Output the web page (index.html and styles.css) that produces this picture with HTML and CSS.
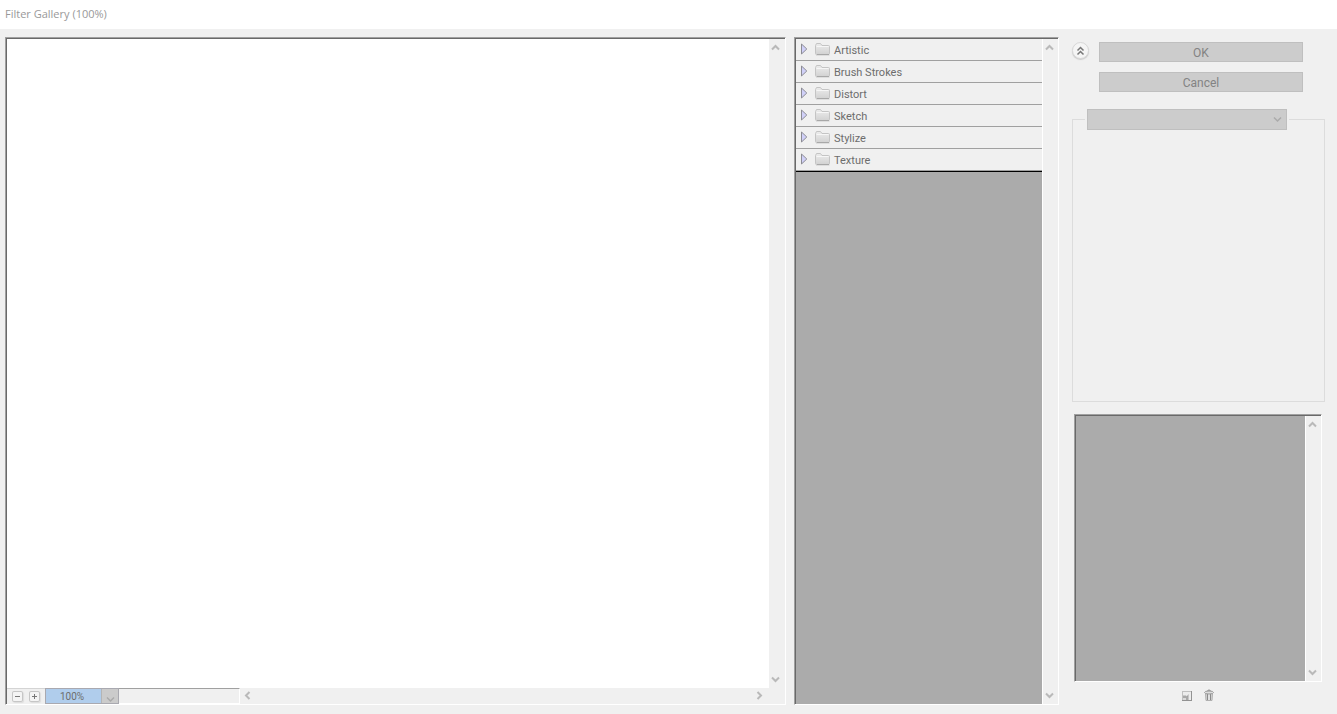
FILE: index.html
```html
<!DOCTYPE html>
<html lang="en">
<head>
<meta charset="utf-8">
<title>Filter Gallery (100%)</title>
<link rel="stylesheet" href="styles.css">
</head>
<body>
<svg class="defs" aria-hidden="true">
  <defs>
    <linearGradient id="folder-fill" x1="0" y1="0" x2="0" y2="1"><stop offset="0" stop-color="#ececec"/><stop offset="1" stop-color="#d2d2d2"/></linearGradient>
    <symbol id="up" viewBox="0 0 9 7"><path d="M1 5.5 4.5 2 8 5.5" fill="none" stroke="#b9b9b9" stroke-width="2"/></symbol>
    <symbol id="down" viewBox="0 0 9 7"><path d="M1 1.5 4.5 5 8 1.5" fill="none" stroke="#b9b9b9" stroke-width="2"/></symbol>
    <symbol id="left" viewBox="0 0 7 9"><path d="M5.5 1 2 4.5 5.5 8" fill="none" stroke="#b9b9b9" stroke-width="2"/></symbol>
    <symbol id="right" viewBox="0 0 7 9"><path d="M1.5 1 5 4.5 1.5 8" fill="none" stroke="#b9b9b9" stroke-width="2"/></symbol>
    <symbol id="tri" viewBox="0 0 8 12"><path d="M1.500 1v10L6.800 6z" fill="#d0d0f8" stroke="#8c8c94"/></symbol>
    <symbol id="folder" viewBox="0 0 17 14"><path d="M2 13.5h13.5" stroke="#dedede"/><path d="M1.5 11.5v-8l1-2h4l1.5 2h6.5q1 0 1 1v7q0 1-1 1h-12q-1 0-1-1z" fill="url(#folder-fill)" stroke="#c4c4c4"/><path d="M2.5 4.5h12" stroke="#f6f6f6"/><path d="M3 12.5h12" stroke="#a8a8a8"/></symbol>
  </defs>
</svg>
<header class="titlebar"><h1 class="title">Filter Gallery (100%)</h1></header>
<main class="gallery">
  <section class="panel preview" aria-label="Preview">
    <div class="canvas"></div>
    <div class="vscroll">
      <button class="arrow" aria-label="Scroll up"><svg width="9" height="7"><use href="#up"/></svg></button>
      <button class="arrow" aria-label="Scroll down"><svg width="9" height="7"><use href="#down"/></svg></button>
    </div>
    <div class="statusbar">
      <div class="zoom-tools">
        <button class="zoom-button" aria-label="Zoom out"><svg width="11" height="11"><path d="M3 5.5h5" stroke="#777"/></svg></button>
        <button class="zoom-button" aria-label="Zoom in"><svg width="11" height="11"><path d="M3 5.5h5M5.5 3v5" stroke="#777"/></svg></button>
      </div>
      <div class="zoom-combo">
        <input class="zoom-value" type="text" value="100%" aria-label="Zoom level">
        <button class="zoom-menu" aria-label="Zoom levels"><svg width="9" height="7"><path d="M1 1.5 4.5 5 8 1.5" fill="none" stroke="#aaa" stroke-width="1.5"/></svg></button>
      </div>
      <div class="status"></div>
      <div class="hscroll">
        <button class="arrow" aria-label="Scroll left"><svg width="7" height="9"><use href="#left"/></svg></button>
        <button class="arrow" aria-label="Scroll right"><svg width="7" height="9"><use href="#right"/></svg></button>
      </div>
    </div>
  </section>

  <section class="panel filters" aria-label="Filters">
    <div class="well">
      <ul class="categories">
        <li><button class="category"><svg class="tri" width="8" height="12"><use href="#tri"/></svg><svg class="folder" width="17" height="14"><use href="#folder"/></svg><span class="name">Artistic</span></button></li>
        <li><button class="category"><svg class="tri" width="8" height="12"><use href="#tri"/></svg><svg class="folder" width="17" height="14"><use href="#folder"/></svg><span class="name">Brush Strokes</span></button></li>
        <li><button class="category"><svg class="tri" width="8" height="12"><use href="#tri"/></svg><svg class="folder" width="17" height="14"><use href="#folder"/></svg><span class="name">Distort</span></button></li>
        <li><button class="category"><svg class="tri" width="8" height="12"><use href="#tri"/></svg><svg class="folder" width="17" height="14"><use href="#folder"/></svg><span class="name">Sketch</span></button></li>
        <li><button class="category"><svg class="tri" width="8" height="12"><use href="#tri"/></svg><svg class="folder" width="17" height="14"><use href="#folder"/></svg><span class="name">Stylize</span></button></li>
        <li><button class="category"><svg class="tri" width="8" height="12"><use href="#tri"/></svg><svg class="folder" width="17" height="14"><use href="#folder"/></svg><span class="name">Texture</span></button></li>
      </ul>
    </div>
    <div class="vscroll">
      <button class="arrow" aria-label="Scroll up"><svg width="9" height="7"><use href="#up"/></svg></button>
      <button class="arrow" aria-label="Scroll down"><svg width="9" height="7"><use href="#down"/></svg></button>
    </div>
  </section>

  <section class="side" aria-label="Settings">
    <div class="actions">
      <button class="collapse" aria-label="Hide filters"><svg width="9" height="10"><path d="M1.5 4.5l3-3 3 3M1.5 8.5l3-3 3 3" fill="none" stroke="#777" stroke-width="1.5"/></svg></button>
      <div class="buttons">
        <button class="action">OK</button>
        <button class="action">Cancel</button>
      </div>
    </div>
    <fieldset class="options">
      <legend class="legend"><span class="select-wrap"><select class="filter-select" aria-label="Filter"><option></option></select><svg class="select-arrow" width="9" height="7"><path d="M1 1.5 4.5 5 8 1.5" fill="none" stroke="#aaa" stroke-width="1.5"/></svg></span></legend>
    </fieldset>
    <div class="panel layers">
      <div class="well"></div>
      <div class="vscroll">
        <button class="arrow" aria-label="Scroll up"><svg width="9" height="7"><use href="#up"/></svg></button>
        <button class="arrow" aria-label="Scroll down"><svg width="9" height="7"><use href="#down"/></svg></button>
      </div>
    </div>
    <div class="layer-tools">
      <button class="tool" aria-label="New effect layer"><svg width="12" height="12"><path d="M1 1h9v9H1z" fill="#ececec"/><path d="M1.500 1v9M1 1.500h9" stroke="#c0c0c0"/><path d="M10.500 1v10M1 10.500h10" stroke="#929292"/><path d="M7.500 4v6H5V7.500z" fill="#a0a0a0"/><path d="M2 5.500h3l2 2v2.500H5V8H2z" fill="#a8a8a8"/><path d="M2 8h3v2H2z" fill="#dadada"/></svg></button>
      <button class="tool" aria-label="Delete effect layer"><svg width="12" height="13"><path d="M2.500 4.500h7L9 11.500H3z" fill="#d4d4d4" stroke="#b0b0b0"/><path d="M4.500 5v6M7.500 5v6" stroke="#8a8a8a"/><path d="M6 5v6" stroke="#eee"/><ellipse cx="6" cy="3.500" rx="4.500" ry="1.500" fill="#ddd" stroke="#999"/><path d="M4.500 1.500q1.500-1 3 0" fill="none" stroke="#888"/></svg></button>
    </div>
  </section>
</main>
</body>
</html>
```
FILE: styles.css
```css
* { box-sizing: border-box; }
body {
  margin: 0;
  min-height: 100vh;
  display: flex;
  flex-direction: column;
  background: #f0f0f0;
  color: #6d6d6d;
  font: 11px/16px Roboto, "Open Sans", sans-serif;
}
button, input, select {
  margin: 0;
  padding: 0;
  border: 0;
  border-radius: 0;
  background: none;
  color: inherit;
  font: inherit;
}
svg { display: block; flex: none; }
.defs { position: absolute; width: 0; height: 0; }
.titlebar { height: 29px; padding: 5px; background: #fff; }
.title {
  margin: 0;
  color: #999;
  font-family: "Open Sans", "Noto Sans", sans-serif;
  font-size: 11px;
  font-weight: 400;
  line-height: 18px;
}
.gallery {
  flex: 1;
  display: grid;
  grid-template-columns: 1fr 265px 258px;
  column-gap: 8px;
  padding: 8px 12px 9px 5px;
}
.panel {
  display: grid;
  grid-template-columns: 1fr 16px;
  border: 1px solid #a0a0a0;
  border-right-color: #fff;
  border-bottom-color: #fff;
  box-shadow: inset 1px 1px #696969;
  padding: 1px 0 0 1px;
}
.preview { grid-template-rows: 1fr 16px; }
.canvas { background: #fff; }
.vscroll {
  display: flex;
  flex-direction: column;
  justify-content: space-between;
}
.arrow { display: flex; align-items: center; justify-content: center; width: 13px; height: 17px; }
.statusbar { grid-column: 1 / -1; display: flex; }
.zoom-tools {
  display: flex;
  align-items: center;
  gap: 6px;
  width: 38px;
  padding-left: 5px;
  border-top: 1px solid #d4d4d4;
  border-bottom: 1px solid #f0f0f0;
}
.zoom-button {
  width: 11px;
  height: 11px;
  border-radius: 2px;
  background: #f4f4f4;
  box-shadow: inset 0 0 0 1px #c6c6c6, 1px 1px 1px #ddd;
}
.zoom-combo { display: flex; width: 74px; border: 1px solid #a9a9b0; background: #b0cdec; }
.zoom-value { flex: 1; min-width: 0; padding: 2px 3px 0 0; font-size: 10px; line-height: 12px; text-align: center; }
.zoom-menu {
  display: flex;
  align-items: flex-end;
  justify-content: center;
  width: 17px;
  background: #cbcbcb;
  border-left: 1px solid #b5b5b5;
}
.status {
  width: 121px;
  border-top: 1px solid #a0a0a0;
  border-right: 1px solid #fff;
  border-bottom: 1px solid #fff;
}
.hscroll {
  flex: 1;
  display: flex;
  align-items: center;
  justify-content: space-between;
  padding: 0 19px 2px 1px;
}
.well { background: #ababab; border-right: 1px solid #fff; }
.filters { grid-template-columns: 1fr 15px; }
.categories {
  list-style: none;
  margin: 0;
  padding: 0;
  border-bottom: 1px solid #000;
  background: #f0f0f0;
}
.category {
  display: flex;
  align-items: center;
  width: 100%;
  height: 22px;
  padding-left: 4px;
  border-bottom: 1px solid #a0a0a0;
}
.tri { margin: 0 6px 2px 0; }
.folder { margin-bottom: 1px; }
.name { padding: 2px 0 0 3px; }
.side { display: flex; flex-direction: column; padding-left: 5px; }
.actions { display: flex; gap: 10px; padding: 5px 22px 0 0; }
.collapse {
  display: flex;
  align-items: center;
  justify-content: center;
  width: 17px;
  height: 17px;
  border: 1px solid #d8d8d8;
  border-radius: 50%;
  background: #f5f5f5;
  box-shadow: 0 1px 1px #ccc;
}
.buttons { flex: 1; display: grid; gap: 10px; }
.action {
  height: 20px;
  padding-top: 2px;
  border: 1px solid #bfbfbf;
  background: #cccccc;
  color: #838383;
  font-size: 12px;
  line-height: 16px;
}
.options {
  flex: 1;
  min-width: 0;
  margin: 17px 0 12px;
  padding: 0 12px;
  border: 1px solid #dcdcdc;
}
.legend { width: calc(100% - 23px); padding: 0 2px; }
.select-wrap { position: relative; display: block; }
.filter-select {
  appearance: none;
  display: block;
  width: 100%;
  height: 21px;
  border: 1px solid #bfbfbf;
  background: #cccccc;
}
.select-arrow { position: absolute; right: 5px; top: 7px; pointer-events: none; }
.layers { grid-template-columns: 1fr 15px; height: 268px; margin: 0 3px 0 2px; }
.layer-tools {
  display: flex;
  align-items: center;
  justify-content: center;
  gap: 10px;
  height: 23px;
  padding: 4px 2px 0 0;
}
```
